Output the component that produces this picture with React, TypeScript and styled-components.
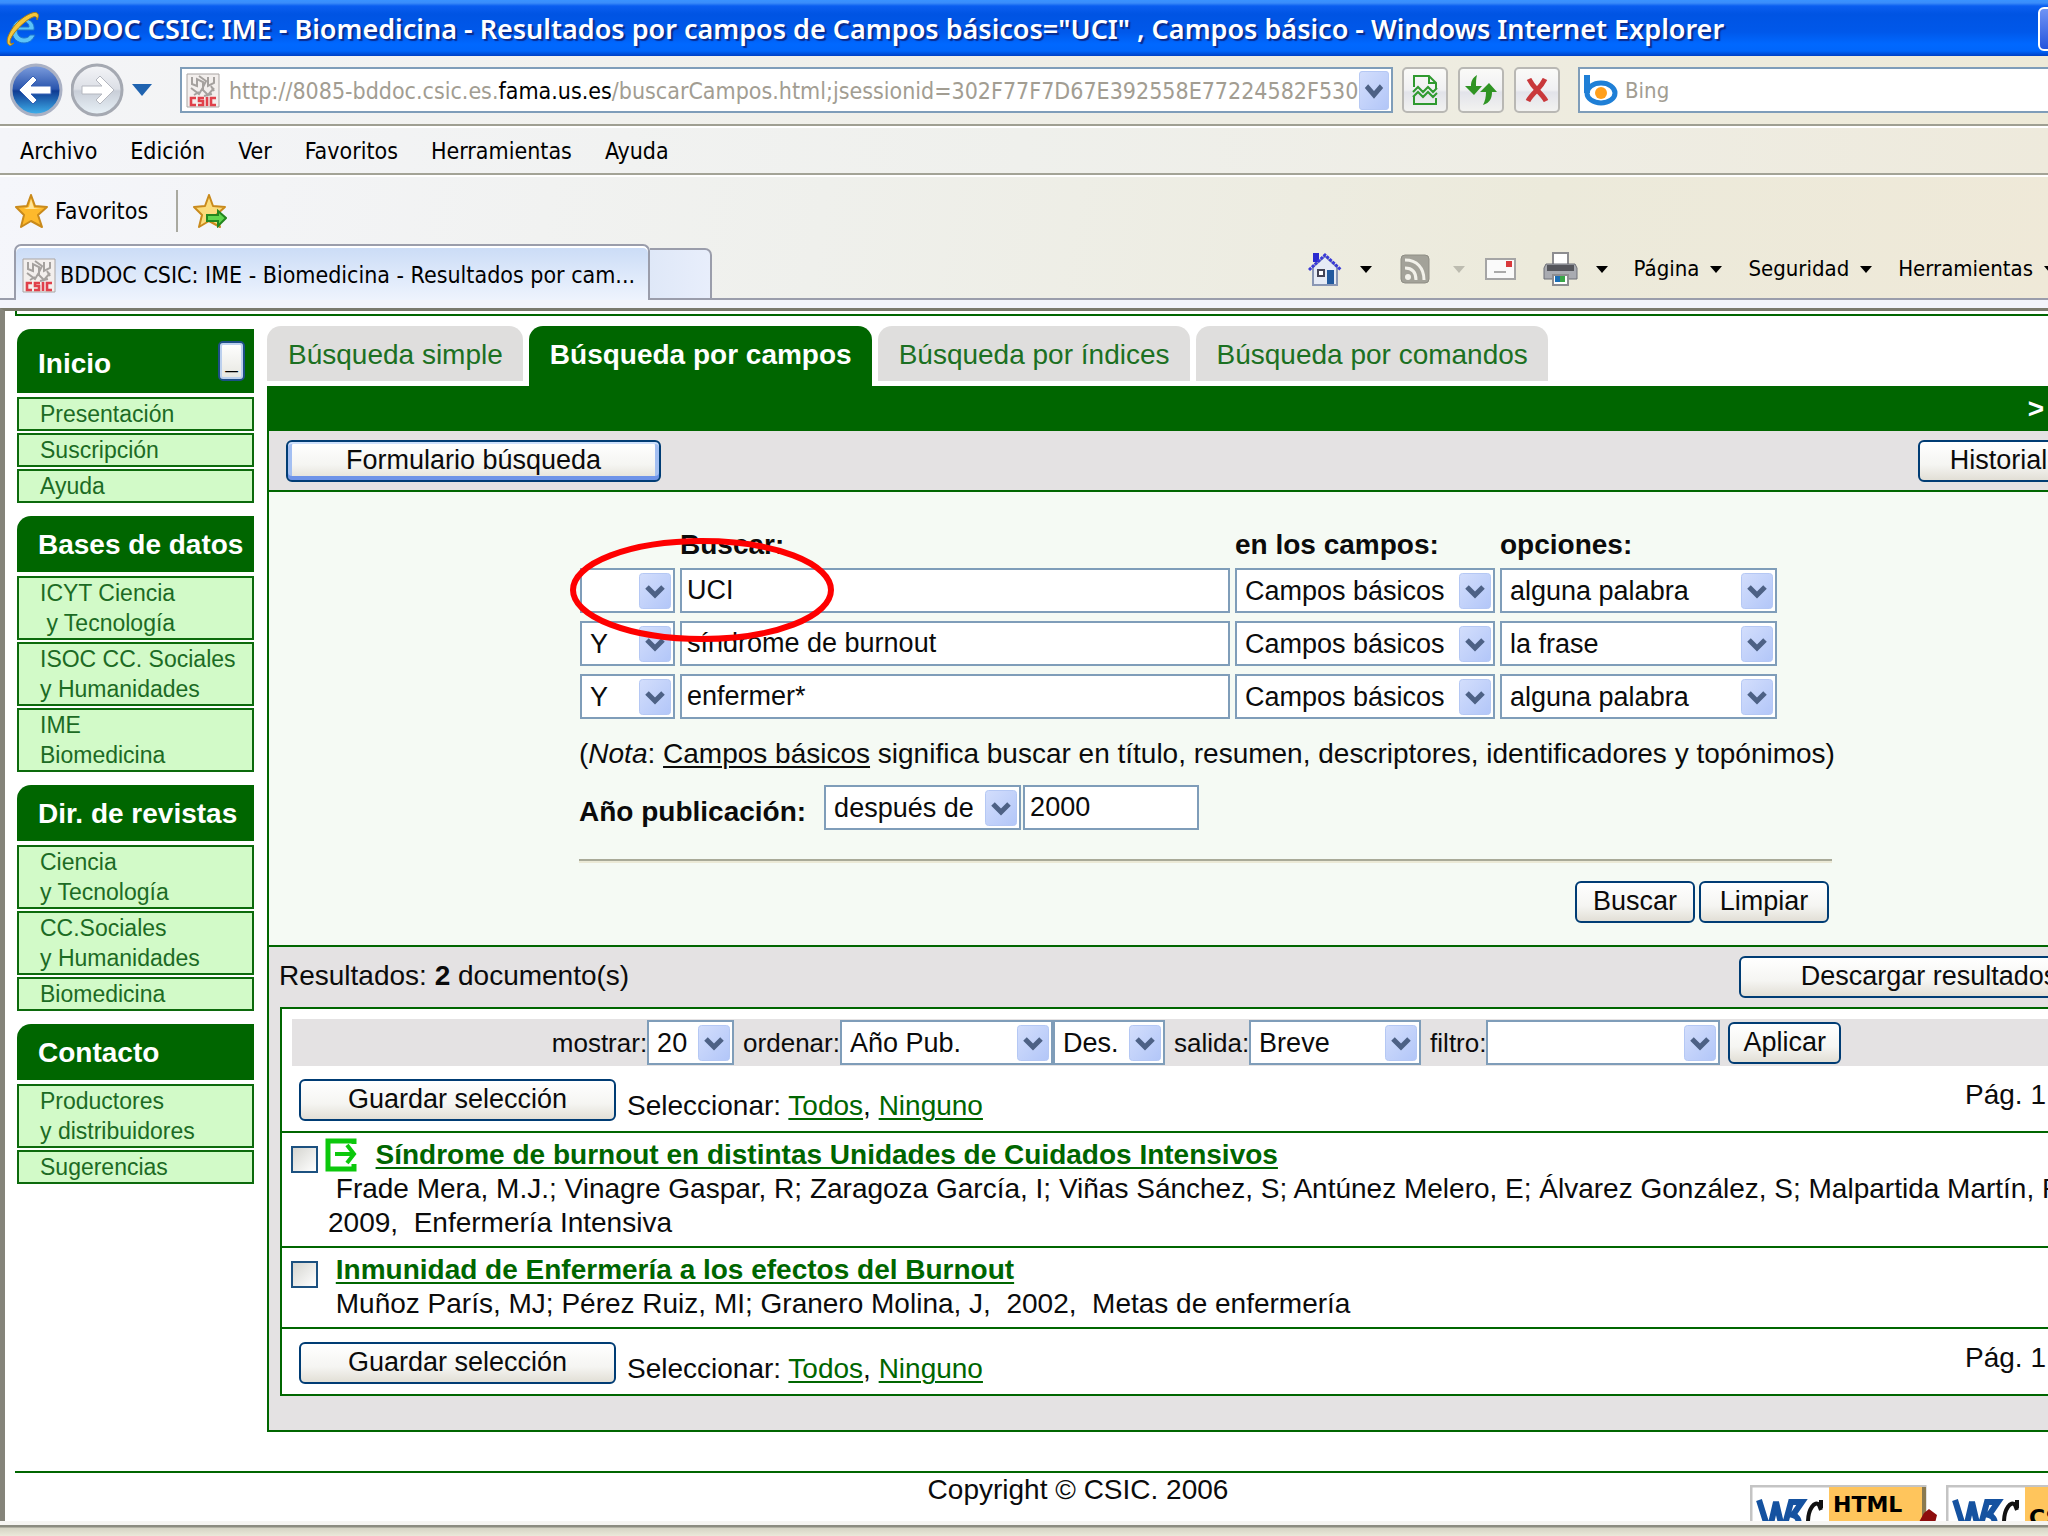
import React from "react";
import styled, { createGlobalStyle } from "styled-components";

const GREEN = "#006600";
const UI_FONT = `"DejaVu Sans Condensed", "Noto Sans", sans-serif`;
const PAGE_FONT = `"Liberation Sans", Arial, sans-serif`;

const GlobalStyle = createGlobalStyle`
  * { box-sizing: border-box; }
  html, body { margin: 0; padding: 0; }
  body { overflow: hidden; background: #fff; }
  button, input, select { font: inherit; color: inherit; margin: 0; }
  svg { display: block; }
`;

const Window = styled.div`
  display: flex;
  flex-direction: column;
  height: 100vh;
  overflow: hidden;
`;

/* ---------- browser chrome ---------- */

const TitleBar = styled.header`
  display: flex;
  align-items: center;
  flex: none;
  height: 56px;
  padding: 1px 0 0 5px;
  gap: 6px;
  color: #fff;
  background: linear-gradient(#3a93ff 0, #3a8cfa 3px, #0a5ef0 6px, #0054e3 14px, #0058ea 32px, #0068ff 44px, #0066fb 51px, #0040c4 56px);
`;

const WindowTitle = styled.h1`
  flex: 1;
  margin: 0;
  font: 600 27px/36px "Noto Sans", sans-serif;
  white-space: nowrap;
  text-shadow: 2px 2px 1px #0a2a8c;
`;

const CaptionButton = styled.button`
  flex: none;
  width: 44px;
  height: 44px;
  margin-right: -34px;
  border: 2px solid #fff;
  border-radius: 6px;
  background: linear-gradient(#6f93f5, #2454dc);
`;

const NavBar = styled.div`
  display: flex;
  align-items: center;
  flex: none;
  height: 70px;
  padding-left: 10px;
  border-bottom: 2px solid #9f9f92;
  background: linear-gradient(90deg, #f4f5f8, #eeede4 60%, #eeead8);
  font: 23px/30px ${UI_FONT};
`;

const HistoryButtons = styled.div`
  display: flex;
  flex: none;
  width: 170px;
  align-items: center;
  gap: 8px;
`;

const PlainButton = styled.button`
  display: flex;
  align-items: center;
  padding: 0;
  border: 0;
  background: none;
`;

const AddressBox = styled.div`
  display: flex;
  align-items: center;
  flex: none;
  width: 1213px;
  height: 46px;
  padding: 0 2px 0 4px;
  border: 2px solid #7f9db9;
  background: #fff;
`;

const AddressText = styled.div`
  flex: 1;
  padding: 2px 0 0 9px;
  overflow: hidden;
  white-space: nowrap;
  color: #a29d92;
  b { font-weight: 400; color: #000; }
`;

const AddressButtons = styled.div`
  display: flex;
  gap: 10px;
  margin: 0 18px 0 9px;
`;

const SquareButton = styled.button`
  display: grid;
  place-items: center;
  width: 46px;
  height: 46px;
  padding: 0;
  border: 2px solid #b9b8b4;
  border-radius: 5px;
  background: linear-gradient(#fafaf8, #f0f0f2 50%, #e2e3ea 55%, #f2f2f0);
`;

const SearchBox = styled.label`
  display: flex;
  align-items: center;
  flex: 1;
  gap: 6px;
  height: 46px;
  padding-left: 3px;
  border: 2px solid #7f9db9;
  border-right: 0;
  background: #fff;
`;

const SearchInput = styled.input`
  flex: 1;
  min-width: 0;
  padding: 2px 0 0;
  border: 0;
  outline: 0;
  background: none;
  font-size: 22px;
  &::placeholder { color: #a29d92; opacity: 1; }
`;

const MenuBar = styled.nav`
  display: flex;
  align-items: center;
  flex: none;
  gap: 33px;
  height: 49px;
  padding: 1px 0 0 20px;
  border-top: 2px solid #fff;
  border-bottom: 2px solid #a3a396;
  background: linear-gradient(90deg, #f4f5f9, #eff0ec 50%, #eeeadc);
  font: 23px/30px ${UI_FONT};
`;

const MenuItem = styled.button`
  padding: 0;
  border: 0;
  background: none;
  color: #000;
  white-space: nowrap;
`;

const LowerChrome = styled.div`
  flex: none;
  border-top: 2px solid #fff;
  background: linear-gradient(100deg, #f5f6fb, #eff0ec 40%, #eceadb 75%, #efe9d8);
  font: 23px/30px ${UI_FONT};
`;

const FavoritesBar = styled.div`
  display: flex;
  align-items: center;
  height: 67px;
  padding: 2px 0 2px 15px;
`;

const FavoritesButton = styled(PlainButton)`
  gap: 6px;
  padding-right: 28px;
  margin-right: 15px;
  height: 42px;
  border-right: 2px solid #a9a9a0;
`;

const TabRow = styled.div`
  display: flex;
  align-items: flex-end;
  height: 56px;
  padding-left: 14px;
  box-shadow: inset 0 -2px 0 #9a9dab;
`;

const BrowserTab = styled.button`
  display: flex;
  align-items: center;
  flex: none;
  gap: 4px;
  width: 636px;
  height: 56px;
  padding: 4px 6px 0 6px;
  border: 2px solid #9a9dab;
  border-bottom: 0;
  border-radius: 7px 7px 0 0;
  background: linear-gradient(#cadbf6, #dce8fa 50%, #eef3fd);
  box-shadow: inset 0 2px 0 #fff;
  text-align: left;
  white-space: nowrap;
`;

const NewTab = styled.button`
  flex: none;
  width: 62px;
  height: 52px;
  border: 2px solid #9a9dab;
  border-left: 0;
  border-radius: 0 7px 0 0;
  background: linear-gradient(90deg, #dfe8f8, #e8eefb);
`;

const CommandBar = styled.div`
  display: flex;
  align-items: center;
  flex: none;
  height: 56px;
  margin-left: auto;
  padding-bottom: 6px;
  font-size: 22px;
`;

const Command = styled.button<{ $space: number; $gap?: number }>`
  display: flex;
  align-items: center;
  gap: ${(p) => p.$gap ?? 11}px;
  margin-right: ${(p) => p.$space}px;
  padding: 0;
  border: 0;
  background: none;
  color: #000;
  white-space: nowrap;
`;

const ChromeFoot = styled.div`
  flex: none;
  height: 8px;
  background: #f3f4fb;
`;

const StatusBar = styled.footer`
  flex: none;
  height: 15px;
  border-top: 4px solid #f6f5f2;
  background: linear-gradient(#8c8c80 0, #8c8c80 2px, #d5d4c4 3px, #ebe9da 100%);
`;

/* ---------- web page ---------- */

const Viewport = styled.main`
  flex: 1;
  min-height: 0;
  overflow: hidden;
  border-top: 3px solid #7b7a6d;
  border-left: 5px solid #85847a;
  background: #fff;
  color: #0b0b0b;
  font: 28px/32px ${PAGE_FONT};
`;

const Page = styled.div`
  margin-right: -93px;
`;

const TopRule = styled.div`
  height: 5px;
  margin-left: 10px;
  border-left: 2px solid ${GREEN};
  border-bottom: 2px solid ${GREEN};
`;

const Columns = styled.div`
  display: flex;
  gap: 13px;
  padding: 10px 0 0 12px;
`;

const Sidebar = styled.aside`
  display: flex;
  flex-direction: column;
  flex: none;
  gap: 13px;
  width: 237px;
  padding-top: 3px;
`;

const MenuGroup = styled.section`
  display: flex;
  flex-direction: column;
  gap: 2px;
`;

const GroupHead = styled.div<{ $tall?: boolean }>`
  display: flex;
  justify-content: space-between;
  align-items: flex-start;
  height: ${(p) => (p.$tall ? 64 : 56)}px;
  margin-bottom: 2px;
  padding: ${(p) => (p.$tall ? 19 : 13)}px 9px 0 21px;
  border-top-left-radius: 14px;
  background: ${GREEN};
  color: #fff;
`;

const GroupTitle = styled.h2`
  margin: 0;
  font: 700 28px/32px ${PAGE_FONT};
  white-space: nowrap;
`;

const CollapseButton = styled.button`
  width: 27px;
  height: 40px;
  margin-top: -7px;
  padding: 0;
  border: 2px solid #1d4f86;
  border-radius: 5px;
  background: linear-gradient(#fff, #e6e6e0);
  box-shadow: inset 0 0 0 2px #bcd0ee;
  color: #000;
  font: 22px/26px ${PAGE_FONT};
`;

const SideLink = styled.a`
  display: block;
  padding-left: 21px;
  border: 2px solid #0c6a0c;
  background: #d2fac8;
  color: #1c6b24;
  font-size: 23px;
  line-height: 30px;
  text-decoration: none;
  white-space: pre;
`;

const Content = styled.div`
  flex: 1;
  min-width: 0;
`;

const SearchTabs = styled.nav`
  display: flex;
  align-items: flex-start;
  gap: 6px;
`;

const SearchTab = styled.a<{ $active?: boolean }>`
  height: ${(p) => (p.$active ? 60 : 55)}px;
  margin-bottom: ${(p) => (p.$active ? 0 : 5)}px;
  padding: 13px 20px 0 21px;
  border-radius: 14px 14px 0 0;
  background: ${(p) => (p.$active ? GREEN : "#dfdedd")};
  color: ${(p) => (p.$active ? "#fff" : "#1c7022")};
  font-weight: ${(p) => (p.$active ? 700 : 400)};
  text-decoration: none;
  white-space: nowrap;
`;

const Breadcrumb = styled.div`
  height: 45px;
  padding: 7px 97px 0 0;
  background: ${GREEN};
  color: #fff;
  font-weight: 700;
  text-align: right;
`;

const Panel = styled.div`
  border: 2px solid ${GREEN};
  border-top: 0;
  background: #e4e2e3;
`;

const PanelBar = styled.div`
  display: flex;
  justify-content: space-between;
  height: 61px;
  padding: 9px 60px 0 17px;
  border-bottom: 2px solid ${GREEN};
`;

const XpButton = styled.button<{ $w: number; $focus?: boolean }>`
  flex: none;
  width: ${(p) => p.$w}px;
  height: 42px;
  padding: 0 0 2px;
  border: 2px solid #003c74;
  border-radius: 6px;
  background: linear-gradient(#fff, #f5f5f2 60%, #e2dfd6);
  box-shadow: ${(p) => (p.$focus ? "inset 0 2px 0 #cee0fb, inset 0 -4px 0 #6e93e8, inset 4px 0 0 #a3bff2, inset -4px 0 0 #a3bff2" : "none")};
  color: #0b0b0b;
  font-size: 27px;
  line-height: 32px;
  white-space: nowrap;
`;

const FormArea = styled.div`
  display: flex;
  justify-content: center;
  padding: 37px 0 22px 3px;
  border-bottom: 2px solid ${GREEN};
  background: #f5faf4;
`;

const SearchForm = styled.form`
  position: relative;
  width: 1253px;
`;

const FieldGrid = styled.div`
  display: grid;
  grid-template-columns: 95px 550px 260px 277px;
  gap: 8px 5px;
  padding-left: 1px;
`;

const ColumnLabel = styled.label`
  margin-bottom: -1px;
  font-weight: 700;
  white-space: nowrap;
`;

const SelectBox = styled.span<{ $w?: number }>`
  display: inline-grid;
  flex: none;
  width: ${(p) => (p.$w ? p.$w + "px" : "100%")};
  height: 45px;
  select, svg { grid-area: 1 / 1; }
  svg { place-self: center end; margin-right: 4px; pointer-events: none; }
`;

const NativeSelect = styled.select`
  appearance: none;
  width: 100%;
  min-width: 0;
  height: 45px;
  padding: 0 36px 0 8px;
  border: 2px solid #7f9db9;
  border-radius: 0;
  background: #fff;
  font-size: 27px;
  line-height: 32px;
`;

const TextField = styled.input<{ $w?: number }>`
  width: ${(p) => (p.$w ? p.$w + "px" : "100%")};
  height: 45px;
  padding: 0 5px;
  border: 2px solid #7f9db9;
  background: #fff;
  font-size: 27px;
`;

const Note = styled.p`
  margin: 19px 0 0;
  white-space: nowrap;
  a { color: inherit; text-underline-offset: 3px; text-decoration-thickness: 2px; }
`;

const YearRow = styled.div`
  display: flex;
  gap: 2px;
  margin-top: 15px;
`;

const YearLabel = styled.label`
  margin-right: 16px;
  padding-top: 11px;
  font-weight: 700;
`;

const Rule = styled.hr`
  height: 4px;
  margin: 29px 0 18px;
  border: 0;
  border-top: 2px solid #a9aa98;
  background: #ebe9d6;
`;

const FormButtons = styled.div`
  display: flex;
  justify-content: flex-end;
  gap: 4px;
  padding-right: 3px;
`;

const Highlight = styled.svg`
  position: absolute;
  left: -9px;
  top: 9px;
  pointer-events: none;
`;

const ResultsHead = styled.div`
  display: flex;
  justify-content: space-between;
  height: 60px;
  padding: 9px 20px 0 10px;
`;

const ResultCount = styled.p`
  margin: 0;
  padding-top: 4px;
`;

const ResultsBox = styled.div`
  margin: 0 11px 34px;
  border: 2px solid ${GREEN};
  background: #fff;
`;

const Toolbar = styled.form`
  display: flex;
  justify-content: center;
  align-items: center;
  height: 47px;
  margin: 10px 10px 0;
  padding-right: 24px;
  background: #e4e2e3;
  label { margin-left: 9px; font-size: 26px; }
`;

const SelectionRow = styled.div`
  display: flex;
  align-items: flex-start;
  padding: 13px 80px 10px 17px;
`;

const SelectionText = styled.p`
  flex: 1;
  margin: 0;
  padding: 11px 0 0 11px;
  height: 42px;
`;

const PageNumber = styled.span`
  height: 32px;
`;

const GreenLink = styled.a`
  color: ${GREEN};
  text-underline-offset: 3px;
  text-decoration-thickness: 2px;
`;

const Result = styled.article`
  display: flex;
  align-items: flex-start;
  gap: 10px;
  padding: 5px 0 6px 9px;
  border-top: 2px solid ${GREEN};
  line-height: 34px;
  white-space: pre;
`;

const LastRow = styled.div`
  border-top: 2px solid ${GREEN};
`;

const Tick = styled.input`
  appearance: none;
  flex: none;
  width: 27px;
  height: 27px;
  margin: 8px 0 0;
  border: 2px solid #1c5180;
  background: linear-gradient(135deg, #d5d5d0, #fff);
`;

const ResultTitle = styled.h3`
  display: flex;
  margin: 0;
  font-size: 28px;
  line-height: 34px;
  svg { margin: 0 3px 0 -3px; }
`;

const ResultText = styled.p`
  margin: 0;
`;

const PageFooter = styled.footer`
  display: grid;
  grid-template-columns: 1fr auto 1fr;
  margin: 39px 0 0 10px;
  border-top: 2px solid ${GREEN};
`;

const Copyright = styled.p`
  grid-column: 2;
  margin: 0;
  padding-top: 1px;
`;

const Badges = styled.div`
  display: flex;
  justify-content: flex-end;
  gap: 8px;
  padding: 12px 7px 0 0;
`;

/* ---------- icons ---------- */

const IeLogo = () => (
  <svg width="34" height="36" viewBox="0 0 34 36" fill="none">
    <path d="M29 19H12c0 5 3 8 7 8 3 0 5-1 6-3h5c-2 5-6 8-11 8-7 0-12-5-12-12S12 8 19 8s11 5 10 11zM12 16h12c0-3-2-5-5-5-4 0-6 2-7 5z" fill="#5cc4f8" stroke="#1c74d0" />
    <path d="M4 34C-1 31 5 18 14 10 22 3 31-1 33 3c1 2 0 4-1 6 0-3-1-4-4-3C20 9 5 24 5 31c0 2 2 2 4 1-2 2-4 3-5 2z" fill="#f4c63c" stroke="#a97c14" />
  </svg>
);

const NavOrb = ({ forward }: { forward?: boolean }) => (
  <svg width="53" height="54" viewBox="0 0 53 54">
    <defs>
      <linearGradient id={forward ? "orbF" : "orbB"} x1="0" y1="0" x2="0" y2="1">
        <stop offset="0" stopColor={forward ? "#f4f5f8" : "#7f9fdf"} />
        <stop offset=".48" stopColor={forward ? "#dcdfe6" : "#2a55ad"} />
        <stop offset=".52" stopColor={forward ? "#c9ced8" : "#0f3b92"} />
        <stop offset="1" stopColor={forward ? "#e9f2f8" : "#41b4ee"} />
      </linearGradient>
    </defs>
    <circle cx="26" cy="27" r="25" fill={`url(#${forward ? "orbF" : "orbB"})`} stroke={forward ? "#a5a9b2" : "#aab1c4"} strokeWidth="3" />
    <path d={forward ? "M43 27 29 13l-4 4 6 6H11v8h20l-6 6 4 4z" : "M9 27 23 13l4 4-6 6h20v8H21l6 6-4 4z"} fill="#fff" stroke={forward ? "#b4b7bf" : "#3661b5"} />
  </svg>
);

const Favicon = () => (
  <svg width="34" height="35" viewBox="0 0 34 35">
    <path d="M1 1h32v33H1z" fill="#f3efed" stroke="#aaa5a3" />
    <path d="M6 4v7l5 2V6l6 3v9M13 3l7 5-3 6M22 4v9l6-3V4M5 15l8 6 3-5 6 6 6-7M8 22l5-3m5 4 8-2M25 13l3 5" fill="none" stroke="#a5a19e" strokeWidth="2" />
    <g fill="none" stroke="#e0404a" strokeWidth="2.6">
      <path d="M10 25H5v7h5M18 25h-5v3h4v4h-5M21 24v9M30 25h-5v7h5" />
    </g>
  </svg>
);

const Chevron = ({ w = 32, h = 36 }: { w?: number; h?: number }) => (
  <svg width={w} height={h} viewBox="0 0 32 36" preserveAspectRatio="none">
    <defs>
      <linearGradient id="chev" x1="0" y1="0" x2="1" y2="1">
        <stop offset="0" stopColor="#d3defc" />
        <stop offset="1" stopColor="#b2c6f8" />
      </linearGradient>
    </defs>
    <rect x=".5" y=".5" width="31" height="35" rx="3" fill="url(#chev)" stroke="#b5c8f4" />
    <path d="m8 14 8 8 8-8" fill="none" stroke="#4d6185" strokeWidth="5" />
  </svg>
);

const Triangle = ({ color = "#000", w = 12, h = 7 }: { color?: string; w?: number; h?: number }) => (
  <svg width={w} height={h} viewBox="0 0 12 7" preserveAspectRatio="none">
    <path d="M0 0h12L6 7z" fill={color} />
  </svg>
);

const CompatIcon = () => (
  <svg width="26" height="32" viewBox="0 0 26 32" fill="none" stroke="#2f9a2f" strokeWidth="2">
    <path d="M2 13V2h15l7 7v6M17 2v7h7M2 22v8h22v-6" />
    <path d="m1 18 5-5 5 5 5-5 5 5 4-4M1 23l5-5 5 5 5-5 5 5 4-4" />
  </svg>
);

const RefreshIcon = () => (
  <svg width="32" height="30" viewBox="0 0 32 30" fill="#2f9423">
    <path d="M12 0C7 3 6 7 6 11H0l9 9 8-9h-6c0-4 0-7 1-11z" />
    <path d="M18 30c7-2 9-7 9-13h5l-8-9-9 9h6c0 5-1 9-3 13z" />
  </svg>
);

const StopIcon = () => (
  <svg width="24" height="24" viewBox="0 0 24 24">
    <path d="M4 1c2 4 5 8 8 11 3-3 6-7 8-11M3 23c2-4 6-8 9-11 3 3 7 7 9 11" fill="none" stroke="#c9383b" strokeWidth="5" />
  </svg>
);

const BingIcon = () => (
  <svg width="36" height="32" viewBox="0 0 36 32" fill="none">
    <path d="M4 1v18" stroke="#1f7fd6" strokeWidth="6" />
    <ellipse cx="18" cy="19" rx="14" ry="10" stroke="#1f7fd6" strokeWidth="5" />
    <circle cx="18" cy="19" r="6" fill="#ff9f1c" />
  </svg>
);

const Star = ({ arrow }: { arrow?: boolean }) => (
  <svg width="34" height="34" viewBox="0 0 34 34">
    <path d="m16 1 4 11 12 1-9 8 4 12-11-6-10 6 3-12-8-8 11-1z" fill={arrow ? "#fbdc7c" : "#fdb92c"} stroke="#c98a1c" strokeWidth="2" strokeLinejoin="round" />
    {!arrow && <path d="m16 5 3 9 8 1H9l5-2z" fill="#ffe59a" />}
    {arrow && <path d="M14 21h11v-4l8 7-8 8v-5H14z" fill="#5fd64e" stroke="#23861f" strokeWidth="2" />}
  </svg>
);

const HomeIcon = () => (
  <svg width="34" height="34" viewBox="0 0 34 34">
    <path d="M5 15 17 4l12 11v18H5z" fill="#e6ebf5" stroke="#8a97b4" strokeWidth="2" />
    <path d="M5 1h6v9H5z" fill="#2a2ad0" />
    <path d="M1 18 17 3l16 15" fill="none" stroke="#3a3ad8" strokeWidth="3" strokeDasharray="3 1" />
    <path d="M19 18h7v14h-7z" fill="#225a9e" />
    <path d="M10 18h6v6h-6z" fill="#fff" stroke="#445" strokeWidth="2" />
  </svg>
);

const RssIcon = () => (
  <svg width="30" height="30" viewBox="0 0 30 30">
    <rect x="1" y="1" width="28" height="28" rx="4" fill="#a3a299" stroke="#8f8e85" />
    <circle cx="8" cy="23" r="3" fill="#f2f1ea" />
    <path d="M5 14c7 0 11 4 11 12M5 6c12 0 19 8 19 20" fill="none" stroke="#f2f1ea" strokeWidth="3" />
  </svg>
);

const MailIcon = () => (
  <svg width="31" height="22" viewBox="0 0 31 22">
    <path d="M1 1h29v20H1z" fill="#fafafa" stroke="#a5a5a5" strokeWidth="2" />
    <path d="M21 3h6v6h-6z" fill="#d9393b" />
    <path d="M9 14h12" stroke="#aaa" strokeWidth="2" />
  </svg>
);

const PrinterIcon = () => (
  <svg width="35" height="34" viewBox="0 0 35 34">
    <path d="M10 1h15v12H10z" fill="#fff" stroke="#8d8d90" strokeWidth="2" />
    <path d="M3 12h29l2 4v11H1V16z" fill="#a9abb1" stroke="#6d6f76" />
    <path d="M4 13h27v6H4z" fill="#55565c" />
    <path d="M10 23h15v10H10z" fill="#fff" stroke="#8d8d90" strokeWidth="2" />
    <path d="M12 24h5v6h-5z" fill="#1b6fb5" />
    <path d="M17 24h5v6h-5z" fill="#3aa648" />
  </svg>
);

const ExitIcon = () => (
  <svg width="32" height="34" viewBox="0 0 32 34" fill="none" stroke="#0cc80c" strokeWidth="5">
    <path d="M29 6V3H3v28h26v-5" />
    <path d="M10 16h17" strokeWidth="4" />
    <path d="m22 7 7 9-7 9" strokeWidth="4" />
  </svg>
);

const W3cBadge = ({ label, y }: { label: string; y: number }) => (
  <svg width="188" height="64" viewBox="0 0 188 64">
    <path d="M1 1h174v62H1z" fill="#fff" stroke="#c4c4c4" strokeWidth="3" />
    <path d="M79 2h94v60H79z" fill="#ffc55c" />
    <path d="M174 2v62" stroke="#8a7a50" strokeWidth="4" />
    <path d="m9 15 10 32 7-30 7 30 8-30h11l-9 13c8 2 8 16-3 15" fill="none" stroke="#1552a0" strokeWidth="6" />
    <path d="M58 37c0-13 7-22 11-17l2 5M71 15v8" fill="none" stroke="#111" strokeWidth="4" />
    <text x="83" y={y} fontFamily="DejaVu Sans, sans-serif" fontWeight="700" fontSize="22">{label}</text>
    <path d="m169 37 5-9 5-4 8 6-2 8-8 6-8 15z" fill="#8e0d0d" />
  </svg>
);

/* ---------- composed parts ---------- */

type SelectProps = { label: string; value: string; w?: number; id?: string };

const Select = ({ label, value, w, id }: SelectProps) => (
  <SelectBox $w={w}>
    <NativeSelect id={id} aria-label={label} defaultValue={value}>
      <option value={value}>{value}</option>
    </NativeSelect>
    <Chevron />
  </SelectBox>
);

const menus = ["Archivo", "Edición", "Ver", "Favoritos", "Herramientas", "Ayuda"];

const sideGroups = [
  { title: "Inicio", links: ["Presentación", "Suscripción", "Ayuda"] },
  { title: "Bases de datos", links: ["ICYT Ciencia\n y Tecnología", "ISOC CC. Sociales\ny Humanidades", "IME\nBiomedicina"] },
  { title: "Dir. de revistas", links: ["Ciencia\ny Tecnología", "CC.Sociales\ny Humanidades", "Biomedicina"] },
  { title: "Contacto", links: ["Productores\ny distribuidores", "Sugerencias"] },
];

const queryRows = [
  { op: "", term: "UCI", option: "alguna palabra" },
  { op: "Y", term: "síndrome de burnout", option: "la frase" },
  { op: "Y", term: "enfermer*", option: "alguna palabra" },
];

const Selection = () => (
  <SelectionRow>
    <XpButton type="button" $w={317}>Guardar selección</XpButton>
    <SelectionText>
      Seleccionar: <GreenLink href="#todos">Todos</GreenLink>, <GreenLink href="#ninguno">Ninguno</GreenLink>
    </SelectionText>
    <PageNumber>Pág. 1</PageNumber>
  </SelectionRow>
);

export default function App() {
  return (
    <Window>
      <GlobalStyle />
      <TitleBar>
        <IeLogo />
        <WindowTitle>
          BDDOC CSIC: IME - Biomedicina - Resultados por campos de Campos básicos="UCI" , Campos básico - Windows Internet Explorer
        </WindowTitle>
        <CaptionButton aria-label="Minimizar" />
      </TitleBar>

      <NavBar>
        <HistoryButtons>
          <PlainButton aria-label="Atrás"><NavOrb /></PlainButton>
          <PlainButton aria-label="Adelante"><NavOrb forward /></PlainButton>
          <PlainButton aria-label="Páginas recientes"><Triangle color="#1f63b0" w={20} h={12} /></PlainButton>
        </HistoryButtons>
        <AddressBox>
          <Favicon />
          <AddressText role="textbox" aria-label="Dirección">
            http://8085-bddoc.csic.es.<b>fama.us.es</b>/buscarCampos.html;jsessionid=302F77F7D67E392558E77224582F530
          </AddressText>
          <PlainButton aria-label="Mostrar direcciones"><Chevron w={30} h={39} /></PlainButton>
        </AddressBox>
        <AddressButtons>
          <SquareButton aria-label="Vista de compatibilidad"><CompatIcon /></SquareButton>
          <SquareButton aria-label="Actualizar"><RefreshIcon /></SquareButton>
          <SquareButton aria-label="Detener"><StopIcon /></SquareButton>
        </AddressButtons>
        <SearchBox>
          <BingIcon />
          <SearchInput placeholder="Bing" aria-label="Buscar en Bing" />
        </SearchBox>
      </NavBar>

      <MenuBar>
        {menus.map((m) => <MenuItem key={m}>{m}</MenuItem>)}
      </MenuBar>

      <LowerChrome>
        <FavoritesBar>
          <FavoritesButton><Star />Favoritos</FavoritesButton>
          <PlainButton aria-label="Agregar a favoritos"><Star arrow /></PlainButton>
        </FavoritesBar>
        <TabRow>
          <BrowserTab><Favicon />BDDOC CSIC: IME - Biomedicina - Resultados por cam...</BrowserTab>
          <NewTab aria-label="Nueva pestaña" />
          <CommandBar>
            <Command aria-label="Página principal" $space={28} $gap={18}><HomeIcon /><Triangle /></Command>
            <Command aria-label="Fuentes" $space={20} $gap={23}><RssIcon /><Triangle color="#bdbcb0" /></Command>
            <Command aria-label="Leer correo" $space={27}><MailIcon /></Command>
            <Command aria-label="Imprimir" $space={26} $gap={18}><PrinterIcon /><Triangle /></Command>
            <Command $space={26}>Página<Triangle /></Command>
            <Command $space={26}>Seguridad<Triangle /></Command>
            <Command $space={-8}>Herramientas<Triangle /></Command>
          </CommandBar>
        </TabRow>
      </LowerChrome>
      <ChromeFoot />

      <Viewport>
        <Page>
          <TopRule />
          <Columns>
            <Sidebar>
              {sideGroups.map((g, i) => (
                <MenuGroup key={g.title}>
                  <GroupHead $tall={i === 0}>
                    <GroupTitle>{g.title}</GroupTitle>
                    {i === 0 && <CollapseButton>_</CollapseButton>}
                  </GroupHead>
                  {g.links.map((l) => <SideLink key={l} href="#menu">{l}</SideLink>)}
                </MenuGroup>
              ))}
            </Sidebar>

            <Content>
              <SearchTabs>
                <SearchTab href="#simple">Búsqueda simple</SearchTab>
                <SearchTab href="#campos" $active>Búsqueda por campos</SearchTab>
                <SearchTab href="#indices">Búsqueda por índices</SearchTab>
                <SearchTab href="#comandos">Búsqueda por comandos</SearchTab>
              </SearchTabs>
              <Breadcrumb>&gt;</Breadcrumb>
              <Panel>
                <PanelBar>
                  <XpButton type="button" $w={375} $focus>Formulario búsqueda</XpButton>
                  <XpButton type="button" $w={161}>Historial</XpButton>
                </PanelBar>

                <FormArea>
                  <SearchForm>
                    <FieldGrid>
                      <span />
                      <ColumnLabel htmlFor="term0">Buscar:</ColumnLabel>
                      <ColumnLabel htmlFor="field0">en los campos:</ColumnLabel>
                      <ColumnLabel htmlFor="option0">opciones:</ColumnLabel>
                      {queryRows.map((r, i) => (
                        <React.Fragment key={r.term}>
                          <Select label="Operador" value={r.op} />
                          <TextField id={`term${i}`} aria-label="Buscar" defaultValue={r.term} />
                          <Select id={`field${i}`} label="en los campos" value="Campos básicos" />
                          <Select id={`option${i}`} label="opciones" value={r.option} />
                        </React.Fragment>
                      ))}
                    </FieldGrid>
                    <Note>
                      (<i>Nota</i>: <a href="#basicos">Campos básicos</a> significa buscar en título, resumen, descriptores, identificadores y topónimos)
                    </Note>
                    <YearRow>
                      <YearLabel htmlFor="year">Año publicación:</YearLabel>
                      <Select label="Periodo" value="después de" w={197} />
                      <TextField id="year" $w={176} defaultValue="2000" />
                    </YearRow>
                    <Rule />
                    <FormButtons>
                      <XpButton type="button" $w={120}>Buscar</XpButton>
                      <XpButton type="reset" $w={130}>Limpiar</XpButton>
                    </FormButtons>
                    <Highlight width="264" height="104" viewBox="0 0 264 104">
                      <ellipse cx="132" cy="52" rx="129" ry="49" fill="none" stroke="#fe0000" strokeWidth="6" />
                    </Highlight>
                  </SearchForm>
                </FormArea>

                <ResultsHead>
                  <ResultCount>Resultados: <b>2</b> documento(s)</ResultCount>
                  <XpButton type="button" $w={380}>Descargar resultados</XpButton>
                </ResultsHead>

                <ResultsBox>
                  <Toolbar>
                    <label htmlFor="show">mostrar:</label>
                    <Select id="show" label="mostrar" value="20" w={87} />
                    <label htmlFor="sort">ordenar:</label>
                    <Select id="sort" label="ordenar" value="Año Pub." w={213} />
                    <Select label="sentido" value="Des." w={112} />
                    <label htmlFor="output">salida:</label>
                    <Select id="output" label="salida" value="Breve" w={172} />
                    <label htmlFor="filter">filtro:</label>
                    <Select id="filter" label="filtro" value="" w={234} />
                    <span>&nbsp;</span>
                    <XpButton type="button" $w={113}>Aplicar</XpButton>
                  </Toolbar>
                  <Selection />
                  <Result>
                    <Tick type="checkbox" aria-label="Seleccionar Síndrome de burnout" />
                    <div>
                      <ResultTitle>
                        <ExitIcon />{"\u00a0\u00a0"}
                        <GreenLink href="#doc1">Síndrome de burnout en distintas Unidades de Cuidados Intensivos</GreenLink>
                      </ResultTitle>
                      <ResultText>
                        {"\u00a0Frade Mera, M.J.; Vinagre Gaspar, R; Zaragoza García, I; Viñas Sánchez, S; Antúnez Melero, E; Álvarez González, S; Malpartida Martín, P"}
                      </ResultText>
                      <ResultText>{"2009,\u00a0 Enfermería Intensiva"}</ResultText>
                    </div>
                  </Result>
                  <Result>
                    <Tick type="checkbox" aria-label="Seleccionar Inmunidad de Enfermería" />
                    <div>
                      <ResultTitle>
                        {"\u00a0"}
                        <GreenLink href="#doc2">Inmunidad de Enfermería a los efectos del Burnout</GreenLink>
                      </ResultTitle>
                      <ResultText>{"\u00a0Muñoz París, MJ; Pérez Ruiz, MI; Granero Molina, J,\u00a0 2002,\u00a0 Metas de enfermería"}</ResultText>
                    </div>
                  </Result>
                  <LastRow><Selection /></LastRow>
                </ResultsBox>
              </Panel>
            </Content>
          </Columns>

          <PageFooter>
            <Copyright>Copyright © CSIC. 2006</Copyright>
            <Badges>
              <W3cBadge label="HTML" y={27} />
              <W3cBadge label="CSS" y={40} />
            </Badges>
          </PageFooter>
        </Page>
      </Viewport>
      <StatusBar />
    </Window>
  );
}
